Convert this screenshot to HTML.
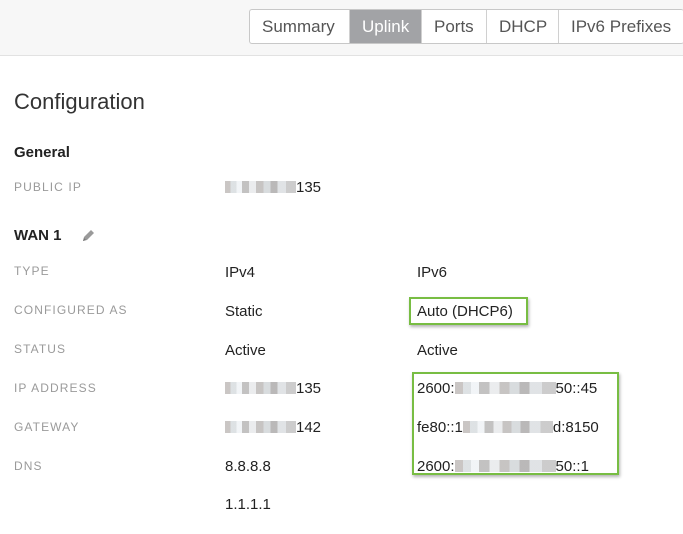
<!DOCTYPE html>
<html><head><meta charset="utf-8"><style>
*{margin:0;padding:0;box-sizing:border-box}
body{width:683px;height:534px;background:#fff;font-family:"Liberation Sans",Arial,sans-serif;position:relative;overflow:hidden;color:#222}
.top{position:absolute;left:0;top:0;width:683px;height:56px;background:#f7f7f7;border-bottom:1px solid #e2e2e2}
.tabs{position:absolute;left:249px;top:9px;height:35px;display:flex;border:1px solid #c8c8c8;border-radius:3px;background:#fff;overflow:hidden;border-right:none}
.tabs div{height:33px;line-height:33px;font-size:17px;color:#555;padding:0 12px;border-right:1px solid #d0d0d0;white-space:nowrap}
.tabs .on{background:#a2a3a6;color:#fff}
.a{position:absolute;white-space:nowrap}
.h1{font-size:22px;font-weight:300;color:#333;left:14px;top:89px}
.h2{font-size:15px;font-weight:bold;color:#222;left:14px}
.lb{font-size:12px;color:#9a9a9a;letter-spacing:1.1px;left:14px}
.v{font-size:15px;color:#222}
.bl{display:inline-block;height:12px;vertical-align:-1px;background:linear-gradient(90deg,#bdb8b6 0 8%,#d5dadd 8% 16%,#eef2f5 16% 24%,#b4b3b2 24% 34%,#e6e8ea 34% 44%,#b9b6b4 44% 54%,#cfd3d6 54% 64%,#a9a7a7 64% 74%,#d9dcdf 74% 86%,#c0bfc0 86% 100%);opacity:.8}
.gb{position:absolute;border:2px solid #78bd43;box-shadow:1px 2px 3px rgba(0,0,0,.3)}
</style></head><body>
<div class="top"></div>
<div class="tabs"><div style="width:100px">Summary</div><div class="on" style="width:72px">Uplink</div><div style="width:65px">Ports</div><div style="width:72px">DHCP</div><div style="width:125px;border-right:none">IPv6 Prefixes</div></div>
<div class="a h1">Configuration</div>
<div class="a h2" style="top:144px">General</div>
<div class="a lb" style="top:180px">PUBLIC IP</div>
<div class="a v" style="left:225px;top:179px"><span class="bl" style="width:71px"></span>135</div>
<div class="a h2" style="top:227px">WAN 1</div>
<svg class="a" style="left:80px;top:228px" width="16" height="16" viewBox="0 0 16 16"><path d="M3 13l1-4 7-7 3 3-7 7z" fill="#9a9a9a"/><path d="M3 13l1-3 2 2z" fill="#777"/></svg>
<div class="a lb" style="top:264px">TYPE</div>
<div class="a v" style="left:225px;top:264px">IPv4</div><div class="a v" style="left:417px;top:264px">IPv6</div>
<div class="a lb" style="top:303px">CONFIGURED AS</div>
<div class="a v" style="left:225px;top:303px">Static</div><div class="a v" style="left:417px;top:303px">Auto (DHCP6)</div>
<div class="a lb" style="top:342px">STATUS</div>
<div class="a v" style="left:225px;top:342px">Active</div><div class="a v" style="left:417px;top:342px">Active</div>
<div class="a lb" style="top:381px">IP ADDRESS</div>
<div class="a v" style="left:225px;top:380px"><span class="bl" style="width:71px"></span>135</div>
<div class="a v" style="left:417px;top:380px">2600:<span class="bl" style="width:101px"></span>50::45</div>
<div class="a lb" style="top:420px">GATEWAY</div>
<div class="a v" style="left:225px;top:419px"><span class="bl" style="width:71px"></span>142</div>
<div class="a v" style="left:417px;top:419px">fe80::1<span class="bl" style="width:90px"></span>d:8150</div>
<div class="a lb" style="top:459px">DNS</div>
<div class="a v" style="left:225px;top:458px">8.8.8.8</div>
<div class="a v" style="left:417px;top:458px">2600:<span class="bl" style="width:101px"></span>50::1</div>
<div class="a v" style="left:225px;top:496px">1.1.1.1</div>
<div class="gb" style="left:409px;top:297px;width:119px;height:28px"></div>
<div class="gb" style="left:412px;top:372px;width:207px;height:103px"></div>
</body></html>
